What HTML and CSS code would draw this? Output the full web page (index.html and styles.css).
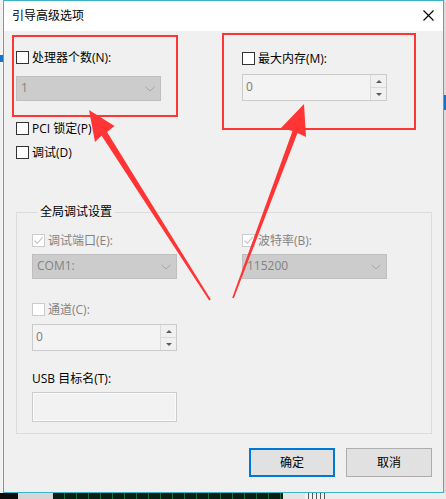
FILE: index.html
```html
<!DOCTYPE html>
<html lang="zh-CN">
<head>
<meta charset="utf-8">
<title>引导高级选项</title>
<link rel="stylesheet" href="styles.css">
</head>
<body>
<div class="screen">
  <div class="edge-left"><span class="edge-blue"></span></div>
  <div class="window">
    <div class="titlebar">
      <span class="title">引导高级选项</span>
      <svg class="close" width="11" height="11" viewBox="0 0 11 11"><path d="M0.5 0.5 L10.5 10.5 M10.5 0.5 L0.5 10.5" stroke="#000" stroke-width="1.1" fill="none"/></svg>
    </div>
    <div class="content">
      <div class="top">
        <div class="col col-left">
          <div class="row"><span class="chk"></span><span>处理器个数(N):</span></div>
          <div class="combo combo-first"><span>1</span><svg width="10" height="6" viewBox="0 0 10 6"><path d="M0.5 0.8 L5 5 L9.5 0.8" stroke="#a6a6a6" fill="none"/></svg></div>
          <div class="row row-pci"><span class="chk"></span><span>PCI 锁定(P)</span></div>
          <div class="row row-debug"><span class="chk"></span><span>调试(D)</span></div>
        </div>
        <div class="col col-right">
          <div class="row"><span class="chk"></span><span>最大内存(M):</span></div>
          <div class="spin spin-mem">
            <span class="spin-val">0</span>
            <span class="spin-btns"><span class="sb"><i class="up"></i></span><span class="sb"><i class="down"></i></span></span>
          </div>
        </div>
      </div>
      <fieldset class="group">
        <legend>全局调试设置</legend>
        <div class="gtop">
          <div class="col">
            <div class="row dis"><span class="chk chk-dis"><svg width="11" height="11" viewBox="0 0 11 11"><path d="M1.5 5.5 L4.3 8.3 L9.7 2.2" stroke="#c6c6c6" stroke-width="1.2" fill="none"/></svg></span><span>调试端口(E):</span></div>
            <div class="combo combo-g"><span>COM1:</span><svg width="10" height="6" viewBox="0 0 10 6"><path d="M0.5 0.8 L5 5 L9.5 0.8" stroke="#a6a6a6" fill="none"/></svg></div>
          </div>
          <div class="col">
            <div class="row dis"><span class="chk chk-dis"><svg width="11" height="11" viewBox="0 0 11 11"><path d="M1.5 5.5 L4.3 8.3 L9.7 2.2" stroke="#c6c6c6" stroke-width="1.2" fill="none"/></svg></span><span>波特率(B):</span></div>
            <div class="combo combo-g"><span>115200</span><svg width="10" height="6" viewBox="0 0 10 6"><path d="M0.5 0.8 L5 5 L9.5 0.8" stroke="#a6a6a6" fill="none"/></svg></div>
          </div>
        </div>
        <div class="gleft">
          <div class="row dis row-chan"><span class="chk chk-dis"></span><span>通道(C):</span></div>
          <div class="spin spin-chan">
            <span class="spin-val">0</span>
            <span class="spin-btns"><span class="sb"><i class="up"></i></span><span class="sb"><i class="down"></i></span></span>
          </div>
          <div class="row row-usb"><span>USB 目标名(T):</span></div>
          <div class="textbox"></div>
        </div>
      </fieldset>
      <div class="buttons">
        <div class="btn btn-primary">确定</div>
        <div class="btn">取消</div>
      </div>
    </div>
  </div>
  <div class="edge-right"><span class="edge-blue2"></span></div>
  <div class="desk">
    <span class="d1"></span><span class="d2"></span><span class="d3"></span><span class="d4"></span><span class="d5"></span>
  </div>
  <div class="mark mark-1"></div>
  <div class="mark mark-2"></div>
  <svg class="arrows" width="446" height="499" viewBox="0 0 446 499">
    <polygon fill="#ff3535" points="89,110 114.5,126 107,132 210.8,299.5 209.2,300.5 101.5,135.5 95,142"/>
    <polygon fill="#ff3535" points="304,104 306,137 297.5,133 233.8,298.3 232.2,297.7 292.5,131 281,128"/>
  </svg>
</div>
</body>
</html>
```

FILE: styles.css
```css
* { box-sizing: border-box; }
html, body { margin: 0; padding: 0; }
body {
  width: 446px;
  height: 499px;
  overflow: hidden;
  font-family: "Open Sans", "Noto Sans CJK SC", sans-serif;
  font-size: 12px;
  line-height: 16px;
  color: #000;
  background: #f0f0f0;
}
.screen {
  position: relative;
  width: 446px;
  height: 499px;
  display: grid;
  grid-template-columns: 3px 441px 2px;
  grid-template-rows: 493px 6px;
}
.edge-left { background: #f2f2f2; position: relative; }
.edge-blue { display: block; width: 3px; height: 7px; margin-top: 55px; background: #1a73c8; }
.edge-right { background: #dcdcdc; }
.edge-blue2 { display: block; width: 2px; height: 15px; margin-top: 95px; background: #1a6fc2; }
.window {
  border: 1px solid #3cb3cb;
  background: #f0f0f0;
  display: flex;
  flex-direction: column;
}
.titlebar {
  height: 30px;
  background: #fff;
  display: flex;
  align-items: center;
  justify-content: space-between;
  padding: 0 9px 0 8px;
  flex: none;
}
.title { font-size: 12px; letter-spacing: 0; }
.close { display: block; margin-top: -1px; }
.content { padding: 18px 11px 0 12px; }
.top {
  display: grid;
  grid-template-columns: 145px 145px;
  column-gap: 81px;
  align-items: start;
}
.col { display: flex; flex-direction: column; }
.col-right { margin-top: 1px; }
.row {
  display: flex;
  align-items: center;
  height: 17px;
  gap: 3px;
  white-space: nowrap;
}
.chk {
  width: 13px;
  height: 13px;
  border: 1px solid #333;
  background: #fff;
  flex: none;
  display: flex;
  align-items: center;
  justify-content: center;
}
.chk-dis { border-color: #cccccc; background: #fff; }
.dis { color: #838383; }
.combo {
  width: 145px;
  height: 25px;
  background: #cccccc;
  border: 1px solid #bfbfbf;
  display: flex;
  align-items: center;
  justify-content: space-between;
  padding: 0 5px 0 4px;
  color: #838383;
}
.combo span { margin-top: -1px; }
.combo-first { margin-top: 10px; }
.combo-g { margin-top: 5px; }
.row-pci { margin-top: 19px; }
.row-debug { margin-top: 7px; }
.spin {
  width: 145px;
  height: 27px;
  border: 1px solid #cacaca;
  background: #f3f3f3;
  display: flex;
  justify-content: space-between;
  color: #7a7a7a;
}
.spin-mem { margin-top: 7px; }
.spin-val { padding: 4px 0 0 3px; }
.spin-btns {
  width: 16px;
  display: flex;
  flex-direction: column;
  border-left: 1px solid #dadada;
}
.sb {
  flex: 1;
  display: flex;
  align-items: center;
  justify-content: center;
  background: #f0f0f0;
}
.sb + .sb { border-top: 1px solid #dadada; }
.sb i { display: block; width: 0; height: 0; border-left: 3.5px solid transparent; border-right: 3.5px solid transparent; }
.sb i.up { border-bottom: 3.5px solid #5a5a5a; }
.sb i.down { border-top: 3.5px solid #5a5a5a; }
.group {
  margin: 43px 0 0 0;
  padding: 12px 0 11px 15px;
  border: 1px solid #dcdcdc;
  min-width: 0;
}
.group legend {
  margin-left: 6px;
  padding: 0 2px;
  line-height: 16px;
}
.gtop {
  display: grid;
  grid-template-columns: 145px 145px;
  column-gap: 65px;
}
.gleft { display: flex; flex-direction: column; width: 145px; }
.row-chan { margin-top: 22px; }
.spin-chan { margin-top: 6px; }
.row-usb { margin-top: 19px; }
.textbox {
  margin-top: 5px;
  width: 145px;
  height: 30px;
  border: 1px solid #cccccc;
  background: #f2f2f2;
  box-shadow: inset 0 0 0 1px #fafafa;
}
.buttons {
  display: flex;
  justify-content: flex-end;
  gap: 11px;
  margin-top: 14px;
}
.btn {
  width: 86px;
  height: 29px;
  background: #e1e1e1;
  border: 1px solid #adadad;
  display: flex;
  align-items: center;
  justify-content: center;
}
.btn-primary { border: 2px solid #0078d7; }
.desk {
  grid-column: 1 / 4;
  display: flex;
  background: #ececec;
}
.desk span { display: block; height: 6px; }
.d1 { width: 18px; background: #0c0c0c; }
.d2 { width: 35px; background: #d6d6d6; }
.d3 { width: 230px; background: repeating-linear-gradient(90deg, #0a1f14 0 11px, #1b6b3e 11px 12px); }
.d4 { width: 22px; background: #e4e4e4; }
.d5 { width: 20px; background: repeating-linear-gradient(90deg, #f2f2f2 0 3px, #555 3px 4px); }
.mark {
  position: absolute;
  border: 2px solid #ff3535;
  pointer-events: none;
}
.mark-1 { left: 12px; top: 35px; width: 166px; height: 82px; }
.mark-2 { left: 222px; top: 33px; width: 194px; height: 97px; }
.arrows { position: absolute; left: 0; top: 0; pointer-events: none; }
```
